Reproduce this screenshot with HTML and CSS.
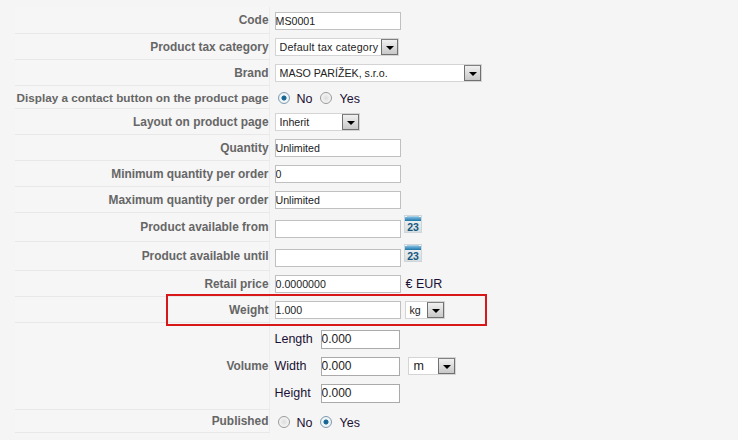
FILE: index.html
```html
<!DOCTYPE html>
<html lang="en">
<head>
<meta charset="utf-8">
<title>Product details</title>
<link rel="stylesheet" href="styles.css">
</head>
<body>
<svg class="defs" width="0" height="0" aria-hidden="true">
  <defs>
    <linearGradient id="calbar" x1="0" y1="0" x2="0" y2="1"><stop offset="0" stop-color="#7cbbe0"/><stop offset="1" stop-color="#1f76a8"/></linearGradient>
    <linearGradient id="calbody" x1="0" y1="0" x2="0" y2="1"><stop offset="0" stop-color="#f4f7f8"/><stop offset="1" stop-color="#d5dde0"/></linearGradient>
    <symbol id="cal" viewBox="0 0 18 18">
      <rect x="0.5" y="0.5" width="17" height="17" fill="url(#calbody)" stroke="#cfd5d8"/>
      <rect x="1" y="2" width="16" height="4" fill="url(#calbar)"/>
      <rect x="3" y="1" width="12" height="1" fill="#a8cfe4"/>
      <text x="9" y="15.5" text-anchor="middle" class="cal-num">23</text>
    </symbol>
  </defs>
</svg>
<table class="form">
  <tr class="r26"><th>Code</th><td><input class="text" value="MS0001"></td></tr>
  <tr class="r26"><th>Product tax category</th><td><div class="select w-tax"><span class="val spaced">Default tax category</span><span class="arrow"></span></div></td></tr>
  <tr class="r26"><th>Brand</th><td><div class="select w-brand"><span class="val">MASO PARÍŽEK, s.r.o.</span><span class="arrow"></span></div></td></tr>
  <tr class="r23"><th class="tight">Display a contact button on the product page</th><td><div class="radios"><span class="radio on"></span><span class="rlabel">No</span><span class="radio"></span><span class="rlabel">Yes</span></div></td></tr>
  <tr class="r26"><th>Layout on product page</th><td><div class="select w-layout"><span class="val">Inherit</span><span class="arrow"></span></div></td></tr>
  <tr class="r26"><th>Quantity</th><td><input class="text" value="Unlimited"></td></tr>
  <tr class="r26"><th>Minimum quantity per order</th><td><input class="text" value="0"></td></tr>
  <tr class="r26"><th>Maximum quantity per order</th><td><input class="text" value="Unlimited"></td></tr>
  <tr class="r29"><th>Product available from</th><td><div class="date"><input class="text" value=""><svg class="cal" width="18" height="18"><use href="#cal"/></svg></div></td></tr>
  <tr class="r29"><th>Product available until</th><td><div class="date"><input class="text" value=""><svg class="cal" width="18" height="18"><use href="#cal"/></svg></div></td></tr>
  <tr class="r26"><th>Retail price</th><td><div class="inline"><input class="text" value="0.0000000"><span class="unit">€ EUR</span></div></td></tr>
  <tr class="r26"><th>Weight</th><td><div class="inline"><input class="text" value="1.000"><div class="select w-kg"><span class="val">kg</span><span class="arrow"></span></div></div></td></tr>
  <tr class="r87"><th>Volume</th><td>
    <div class="volume">
      <span class="vlabel">Length</span><input class="text small" value="0.000"><span></span>
      <span class="vlabel">Width</span><input class="text small" value="0.000"><div class="select w-m"><span class="val big">m</span><span class="arrow"></span></div>
      <span class="vlabel">Height</span><input class="text small" value="0.000"><span></span>
    </div>
  </td></tr>
  <tr class="r23"><th>Published</th><td><div class="radios"><span class="radio"></span><span class="rlabel">No</span><span class="radio on"></span><span class="rlabel">Yes</span></div></td></tr>
</table>
<div class="highlight"></div>
</body>
</html>
```
FILE: styles.css
```css
* { box-sizing: border-box; }
html, body { margin: 0; padding: 0; }
body {
  position: relative;
  width: 738px;
  height: 440px;
  overflow: hidden;
  background: #f5f5f5;
  padding: 7px 0 0 15px;
  font-family: "Liberation Sans", Arial, sans-serif;
  color: #1a1033;
}
.defs { position: absolute; }
.form { border-collapse: collapse; table-layout: fixed; width: 723px; }
.form th {
  width: 254px;
  padding: 1px 0 0 0;
  text-align: right;
  font-size: 11.9px;
  font-weight: bold;
  color: #666;
  background: #f6f6f6;
  border-right: 1px solid #ececec;
  border-bottom: 1px solid #e8e8e8;
  white-space: nowrap;
}
.form th.tight { font-size: 11.73px; }
.form td { padding: 1px 0 0 5px; vertical-align: middle; }
.r26 { height: 26px; }
.r23 { height: 23px; }
.r29 { height: 29px; }
.r87 { height: 87px; }
.text {
  display: block;
  width: 126px;
  height: 18px;
  padding: 0;
  margin: 0;
  border: 1px solid #c0c0c0;
  background: #fff;
  font: 10.67px "Liberation Sans", Arial, sans-serif;
  color: #222;
  outline: none;
}
.text.small {
  width: 79px;
  height: 19px;
  font-size: 12px;
  border-color: #aaa;
}
.select {
  display: flex;
  align-items: stretch;
  height: 18px;
  background: #fff;
  border: 1px solid #d4d4d4;
  font-size: 10.67px;
  color: #222;
}
.val { flex: 1; padding-left: 4px; line-height: 16px; white-space: nowrap; overflow: hidden; }
.val.spaced { letter-spacing: 0.2px; }
.val.big { font-size: 12.5px; padding-left: 5px; }
.arrow {
  position: relative;
  width: 17px;
  flex: none;
  border: 1px solid #707070;
  border-top-color: #808080;
  background: linear-gradient(#f0f0f0, #c8c8c8);
}
.arrow::after {
  content: "";
  position: absolute;
  left: 4px;
  top: 6px;
  border: 4px solid transparent;
  border-top-color: #000;
  border-bottom: 0;
}
.w-tax { width: 124px; }
.w-brand { width: 207px; }
.w-layout { width: 85px; }
.w-kg { width: 40px; }
.w-m { width: 48px; }
.radios {
  display: flex;
  align-items: center;
  padding-left: 3px;
  padding-top: 4px;
}
.radio {
  width: 12px;
  height: 12px;
  flex: none;
  border-radius: 50%;
  border: 1px solid #9a9a9a;
  background: radial-gradient(circle at 50% 50%, #dcdcdc, #fdfdfd 90%);
  margin-top: -2px;
}
.radio.on { background: radial-gradient(circle at 50% 50%, #0d5f8a 0, #1f6f99 30%, #f4f8fb 42%, #dfe6ea 100%); border-color: #7f9db0; }
.rlabel { margin: 0 8px 0 7px; color: #1a1033; font-size: 12.5px; }
.date { display: flex; align-items: flex-start; height: 24px; }
.date .text { margin-top: 5px; }
.cal { display: block; margin-left: 3px; }
.cal-num { font: bold 10.5px "Liberation Sans", Arial, sans-serif; fill: #17577e; }
.inline { display: flex; align-items: center; }
.unit { margin-left: 5px; font-size: 12.5px; color: #1a1033; }
.inline .select { margin-left: 4px; }
.volume {
  display: grid;
  grid-template-columns: 46px 79px auto;
  grid-auto-rows: 19px;
  row-gap: 8px;
  align-items: center;
}
.vlabel { font-size: 12.5px; }
.volume .select { margin-left: 8px; }
.highlight {
  position: absolute;
  left: 166px;
  top: 294px;
  width: 321px;
  height: 32px;
  border: 2px solid #d81818;
}
```
